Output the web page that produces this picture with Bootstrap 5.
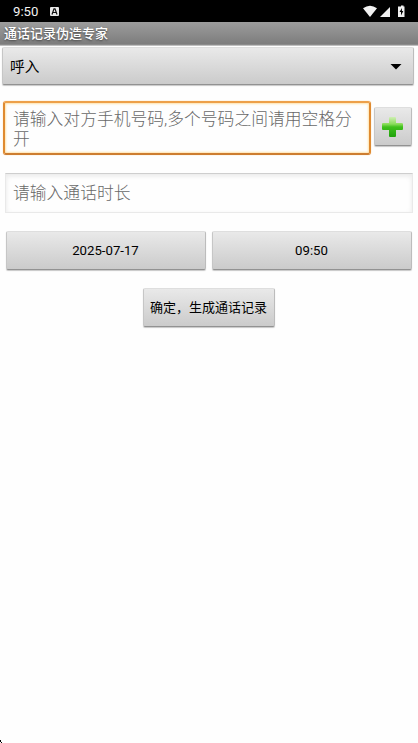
<!DOCTYPE html>
<html lang="zh-CN">
<head>
<meta charset="utf-8">
<meta name="viewport" content="width=device-width, initial-scale=1">
<title>通话记录伪造专家</title>
<link rel="stylesheet" href="https://cdn.jsdelivr.net/npm/bootstrap@5.3.0/dist/css/bootstrap.min.css">
<style>
body{font-family:Roboto,"Noto Sans CJK SC",sans-serif;height:743px;background:#fefefe;color:#000;overflow:hidden}
.statusbar{height:22px;background:#000;color:#f2f2f2;font-size:13.2px;line-height:22px;padding:1px 11px 0 13px}
.titlebar{height:24px;padding:0 4px 1px;font-size:13px;line-height:23px;color:#fff;font-weight:500;background:linear-gradient(#9c9c9c,#7d7d7d 22px,#999 23px,#e4e4e4 24px);text-shadow:0 1px 2px #444}
.key,.key:hover{background:linear-gradient(#e9e9e9,#cbcbcb);border:1px solid;border-color:#dedede #bcbcbc #929292 #c6c6c6;border-radius:2px;box-shadow:0 1px 1px rgba(0,0,0,.22);color:#000;font-size:13px;line-height:20px;padding:0}
.spinner{height:38px;width:412px;margin:1px 0 0 2px;font-size:14.7px;padding:1px 11px 0 7px}
.phone-row{margin:16px 6px 0 3px;height:54px}
.hint{color:#686868;font-size:16.8px;line-height:20px;font-weight:300}
.phone{width:368px;border:2px solid #e08a2c;border-color:#eda04a #df8a30 #cd7d30 #df8a30;border-radius:3px;padding:6px 7px 0 8px;box-shadow:inset 0 0 2px 1px #ffe3ad,0 0 1px #f5b45e}
.plus{width:38px;height:39px;margin-top:6px;padding-right:1px}
.duration{height:40px;margin:18px 5px 0;padding:0 8px 0 7px;border:1px solid #e9e9e9;border-top-color:#cecece;box-shadow:inset 0 2px 5px #e8e8e8}
.pair{margin:18px 6px 0;gap:6px}
.pair .key{height:39px;padding:1px 1px 0 0;font-size:13.2px}
.submit{width:132px;height:39px;margin:18px 0 0 143px;padding:0 1px 0 0}
.corner{width:3px;height:3px}
.notice{margin-left:12px}
</style>
<script src="https://cdn.jsdelivr.net/npm/bootstrap@5.3.0/dist/js/bootstrap.bundle.min.js"></script>
</head>
<body class="d-flex flex-column">
<header>
<div class="statusbar d-flex align-items-center">
<span>9:50</span>
<svg class="ms-auto order-2" width="44" height="16" viewBox="0 0 44 16" fill="#f0f0f0"><path d="M0 4.3Q7-1 14 4.3L7 13Z"/><path d="M27 3V13H17Z"/><path d="M36.500 2.500H38V1.500H40.500V2.500H41.500V13H35V2.500H36.500Z"/><path d="M39 4L36.500 8H38V11.500L40.300 7H38.900Z" fill="#000"/></svg>
<svg class="order-1 notice" width="9" height="9" viewBox="0 0 9 9"><rect width="9" height="9" rx="1" fill="#e8e8e8"/><path d="M2 7.500L4 1.800H5L7 7.500M3 5.500H6" fill="none" stroke="#111" stroke-width="1.200"/></svg>
</div>
<div class="titlebar">通话记录伪造专家</div>
</header>
<main>
<button class="btn key spinner d-flex align-items-center justify-content-between"><span>呼入</span><svg width="12" height="7" viewBox="0 0 12 7"><path d="M.5 1H11.500L6 6.500Z"/></svg></button>
<div class="phone-row d-flex justify-content-between">
<div class="phone hint">请输入对方手机号码,多个号码之间请用空格分开</div>
<button class="btn key plus d-flex align-items-center justify-content-center" aria-label="添加"><svg width="22" height="22" viewBox="0 0 22 22"><defs><linearGradient id="leaf" x1="0" y1="0" x2="0" y2="1"><stop offset="0" stop-color="#cfeeb4"/><stop offset=".35" stop-color="#8bdd5c"/><stop offset=".5" stop-color="#3fc01c"/><stop offset="1" stop-color="#20a10c"/></linearGradient></defs><path d="M8 1H13Q14 1 14 2V7H19.500Q21 7 21 8V13Q21 14 20 14H14V20Q14 21 13 21H8Q7 21 7 20V14H1Q0 14 0 13V8Q0 7 1 7H7V2Q7 1 8 1Z" fill="url(#leaf)"/></svg></button>
</div>
<div class="duration hint d-flex align-items-center">请输入通话时长</div>
<div class="pair d-flex"><button class="btn key flex-fill w-50">2025-07-17</button><button class="btn key flex-fill w-50">09:50</button></div>
<button class="btn key submit d-block text-nowrap">确定，生成通话记录</button>
</main>
<svg class="corner mt-auto" viewBox="0 0 3 3" shape-rendering="crispEdges"><path d="M0 0H1V2H0ZM1 2H2V3H1Z"/></svg>
</body>
</html>
